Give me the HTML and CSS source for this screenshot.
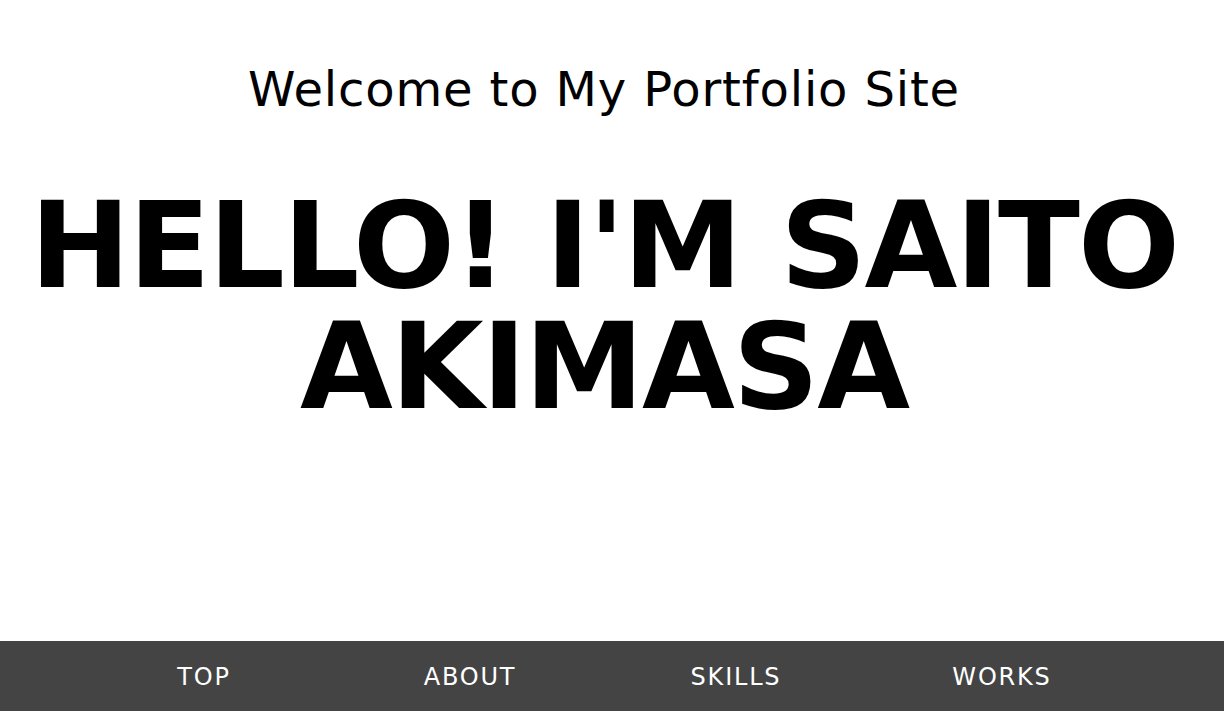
FILE: index.html
```html
<!DOCTYPE html>
<html lang="en">
<head>
<meta charset="utf-8">
<title>Portfolio</title>
<link rel="stylesheet" href="styles.css">
</head>
<body>
<div class="page">
  <header class="hero">
    <p class="subtitle">Welcome to My Portfolio Site</p>
    <h1 class="name">HELLO! I'M SAITO<br>AKIMASA</h1>
  </header>
  <nav class="nav">
    <ul class="nav-list">
      <li class="nav-item">TOP</li>
      <li class="nav-item">ABOUT</li>
      <li class="nav-item">SKILLS</li>
      <li class="nav-item">WORKS</li>
    </ul>
  </nav>
</div>
</body>
</html>
```

FILE: styles.css
```css
html, body {
  margin: 0;
  padding: 0;
  background: #ffffff;
}
body {
  font-family: "DejaVu Sans", Verdana, sans-serif;
  color: #000;
}
.page {
  height: 711px;
  display: flex;
  flex-direction: column;
}
.hero {
  flex: 1;
  display: flex;
  flex-direction: column;
  align-items: center;
  padding: 60px 16px 0 0;
}
.subtitle {
  margin: 0;
  font-size: 48px;
  line-height: 58px;
  font-weight: normal;
  letter-spacing: 0.85px;
}
.name {
  margin: 67px 0 0;
  font-size: 120px;
  line-height: 121px;
  font-weight: bold;
  text-align: center;
  letter-spacing: -2px;
}
.nav {
  height: 70px;
  background: #444444;
}
.nav-list {
  list-style: none;
  margin: 0;
  padding: 0 89px 0 71px;
  height: 100%;
  display: flex;
  align-items: center;
}
.nav-item {
  flex: 1;
  text-align: center;
  color: #ffffff;
  font-size: 24px;
  letter-spacing: 1.8px;
  padding-top: 2px;
}
```
